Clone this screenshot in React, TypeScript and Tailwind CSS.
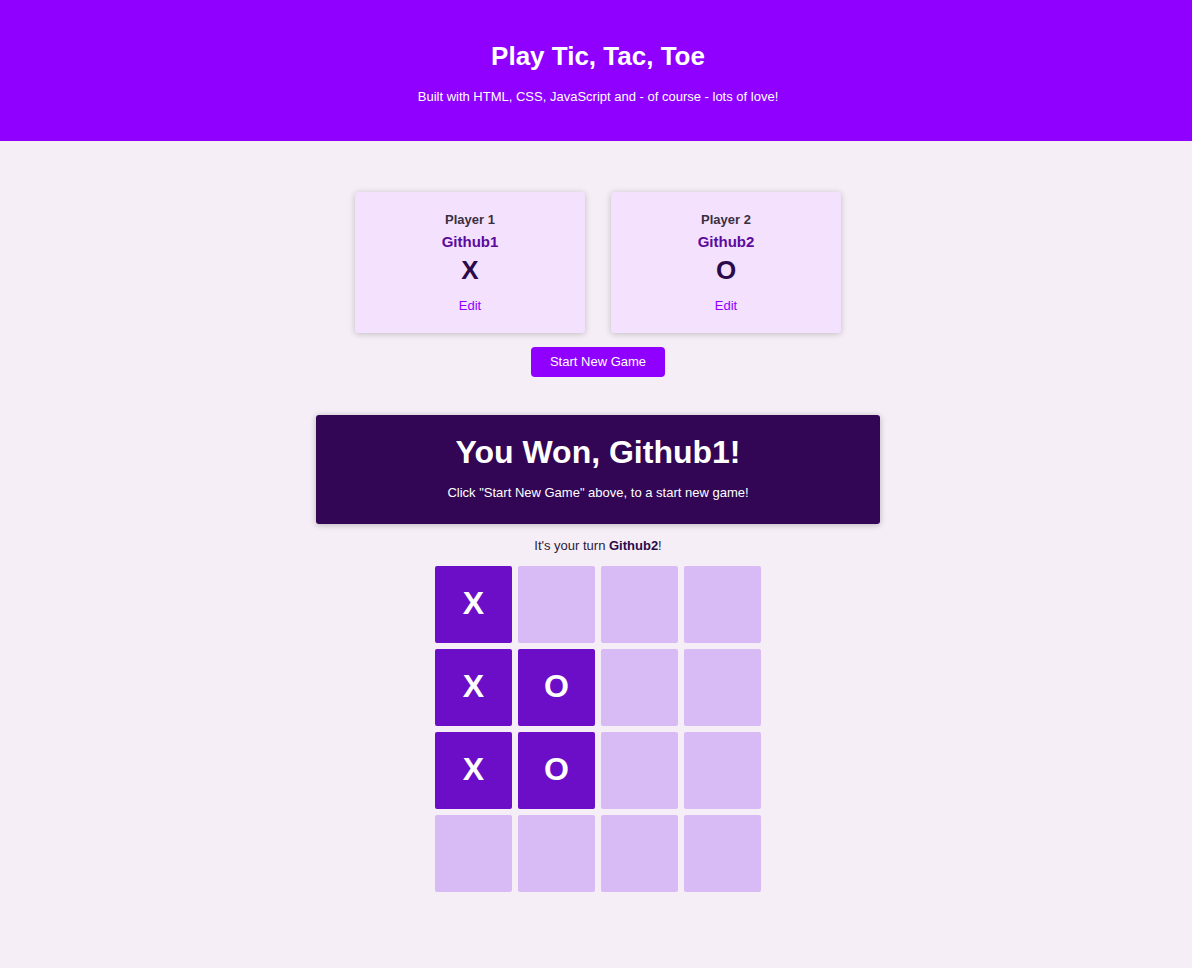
import React from "react";

const board: (string | null)[][] = [
  ["X", null, null, null],
  ["X", "O", null, null],
  ["X", "O", null, null],
  [null, null, null, null],
];

function PlayerCard({ label, name, symbol }: { label: string; name: string; symbol: string }) {
  return (
    <div className="w-[230px] h-[141px] bg-[#f3e1fd] rounded-[3px] shadow-[0_1px_6px_rgba(0,0,0,0.22)] flex flex-col items-center pt-[19px]">
      <div className="text-[13px] leading-[17px] font-bold text-[#3b2f3d]">{label}</div>
      <div className="mt-[5px] text-[15px] leading-[18px] font-bold text-[#5c0a9d]">{name}</div>
      <div className="mt-[4px] text-[26px] leading-[30px] font-bold text-[#2b0a4a]">{symbol}</div>
      <div className="mt-[13px] text-[13px] leading-[16px] text-[#8f00ff]">Edit</div>
    </div>
  );
}

export default function App() {
  return (
    <div
      className="min-h-[968px] bg-[#f6eef6]"
      style={{ fontFamily: '"Liberation Sans", Arial, sans-serif' }}
    >
      <header className="h-[141px] bg-[#8f00ff] flex flex-col items-center pt-[41px] pl-[4px] text-white">
        <h1 className="text-[26px] leading-[30px] font-bold">Play Tic, Tac, Toe</h1>
        <p className="mt-[18px] text-[13px] leading-[16px]">
          Built with HTML, CSS, JavaScript and - of course - lots of love!
        </p>
      </header>

      <main className="flex flex-col items-center pt-[51px] pl-[4px]">
        <div className="flex gap-[26px]">
          <PlayerCard label="Player 1" name="Github1" symbol="X" />
          <PlayerCard label="Player 2" name="Github2" symbol="O" />
        </div>
        <button className="mt-[14px] w-[134px] h-[30px] bg-[#8f00ff] text-white text-[13px] rounded-[4px]">
          Start New Game
        </button>

        <div className="mt-[38px] w-[564px] h-[109px] bg-[#320654] rounded-[3px] shadow-[0_1px_6px_rgba(0,0,0,0.25)] flex flex-col items-center pt-[18px] text-white">
          <div className="text-[32px] leading-[38px] font-bold">You Won, Github1!</div>
          <div className="mt-[14px] text-[13px] leading-[16px]">
            Click "Start New Game" above, to a start new game!
          </div>
        </div>

        <p className="mt-[14px] text-[13px] leading-[16px] text-[#2b1a3a]">
          It's your turn <span className="font-bold text-[#2b0a4a]">Github2</span>!
        </p>

        <div className="mt-[12px] grid grid-cols-[repeat(4,77px)] gap-[6px]">
          {board.flat().map((c, i) => (
            <div
              key={i}
              className={
                c
                  ? "w-[77px] h-[77px] rounded-[2px] bg-[#6c0dc8] flex items-center justify-center pb-[4px] text-white text-[32px] font-bold"
                  : "w-[77px] h-[77px] rounded-[2px] bg-[#d8bbf5]"
              }
            >
              {c}
            </div>
          ))}
        </div>
      </main>
    </div>
  );
}
